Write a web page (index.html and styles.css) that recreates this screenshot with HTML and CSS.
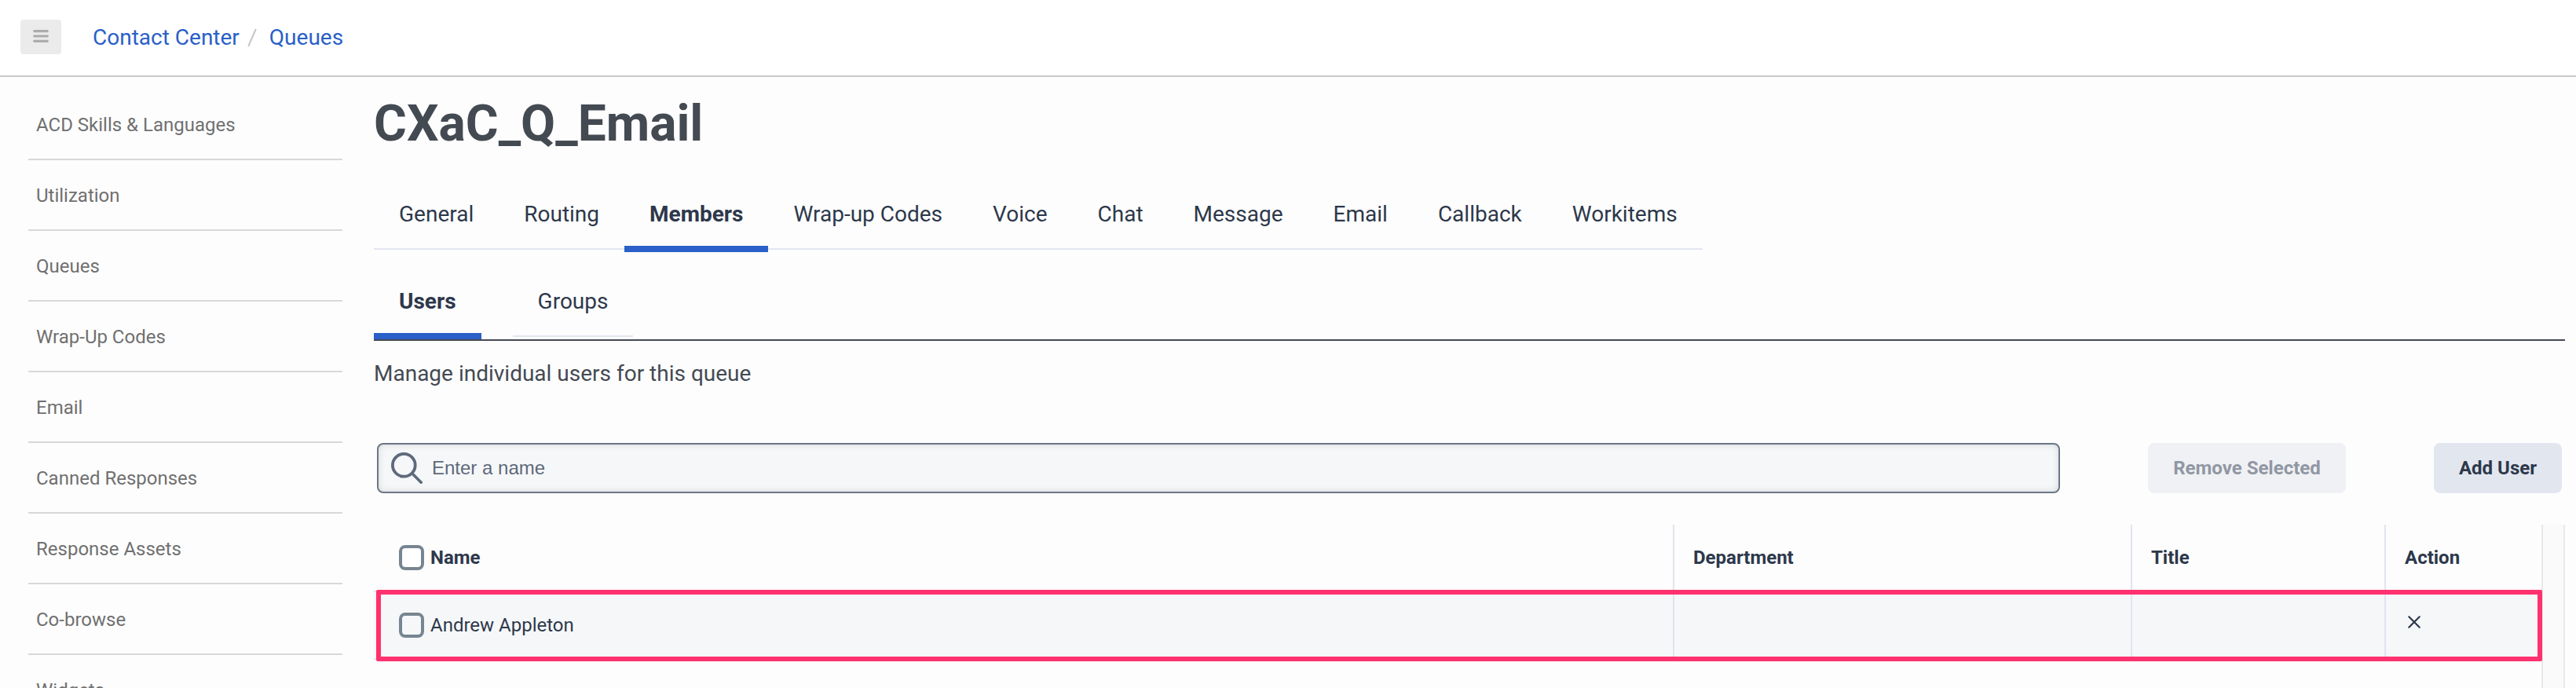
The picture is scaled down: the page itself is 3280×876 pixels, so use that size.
FILE: index.html
```html
<!DOCTYPE html>
<html lang="en">
<head>
<meta charset="utf-8">
<title>Queues - CXaC_Q_Email</title>
<link rel="stylesheet" href="styles.css">
</head>
<body>
<header class="topbar">
  <button class="menu-btn" aria-label="Menu">
    <svg width="20" height="16" viewBox="0 0 20 16"><g fill="#acacac"><rect x="0.3" y="0" width="19.4" height="3.2" rx="1"/><rect x="0.3" y="6.4" width="19.4" height="3.2" rx="1"/><rect x="0.3" y="12.8" width="19.4" height="3.2" rx="1"/></g></svg>
  </button>
  <nav class="crumbs"><a>Contact Center</a><svg class="slash" width="12" height="24" viewBox="0 0 12 24"><path d="M1.2 23 L10.8 1" stroke="#c6c6c6" stroke-width="2"/></svg><a>Queues</a></nav>
</header>
<div class="body">
  <nav class="sidebar">
    <a>ACD Skills &amp; Languages</a>
    <a>Utilization</a>
    <a>Queues</a>
    <a>Wrap-Up Codes</a>
    <a>Email</a>
    <a>Canned Responses</a>
    <a>Response Assets</a>
    <a>Co-browse</a>
    <a>Widgets</a>
  </nav>
  <main class="main">
    <h1>CXaC_Q_Email</h1>
    <div class="tabs">
      <a class="tab">General</a><a class="tab">Routing</a><a class="tab active">Members</a><a class="tab">Wrap-up Codes</a><a class="tab">Voice</a><a class="tab">Chat</a><a class="tab">Message</a><a class="tab">Email</a><a class="tab">Callback</a><a class="tab">Workitems</a>
    </div>
    <div class="subtabs">
      <a class="tab active">Users</a><a class="tab">Groups</a>
    </div>
    <p class="hint">Manage individual users for this queue</p>
    <div class="toolbar">
      <div class="search">
        <svg width="40" height="40" viewBox="0 0 40 40" fill="none" stroke="#5e697a"><circle cx="16.3" cy="16.3" r="14.4" stroke-width="3.8"/><path d="M27 27 L38.2 38.2" stroke-width="3.6" stroke-linecap="round"/></svg>
        <span>Enter a name</span>
      </div>
      <button class="btn disabled">Remove Selected</button>
      <button class="btn add">Add User</button>
    </div>
    <div class="table">
      <div class="grid">
        <div class="row head">
          <div class="cell"><i class="check"></i>Name</div>
          <div class="cell">Department</div>
          <div class="cell">Title</div>
          <div class="cell">Action</div>
        </div>
        <div class="row user">
          <div class="cell"><i class="check"></i>Andrew Appleton</div>
          <div class="cell"></div>
          <div class="cell"></div>
          <div class="cell"><svg class="x" width="16" height="16" viewBox="0 0 16 16" stroke="#2d384b" stroke-width="2.2" stroke-linecap="round"><path d="M1.3 1.3 L14.7 14.7 M14.7 1.3 L1.3 14.7"/></svg></div>
          <div class="highlight"></div>
        </div>
      </div>
      <div class="gutter"></div>
    </div>
  </main>
</div>
</body>
</html>
```
FILE: styles.css
```css
* { box-sizing: border-box; }
html, body { margin: 0; height: 876px; overflow: hidden; }
body { background: #fdfdfd; font-family: Roboto, "Liberation Sans", sans-serif; color: #2d384b; }
button { font: inherit; border: 0; padding: 0; }

.topbar { height: 98px; background: #fff; border-bottom: 2px solid #c9c9c9; display: flex; align-items: flex-start; padding: 25px 0 0 26px; }
.menu-btn { width: 52px; height: 44px; border-radius: 4px; background: #ebebeb; display: flex; align-items: flex-start; justify-content: center; padding-top: 13px; }
.crumbs { display: flex; align-items: center; height: 45px; margin-left: 40px; font-size: 28px; line-height: 45px; color: #2a60c8; }
.slash { margin: 0 16px 0 10px; }

.body { display: flex; height: 778px; overflow: hidden; }
.sidebar { width: 476px; padding: 16px 40px 0 36px; flex: none; }
.sidebar a { display: block; height: 90px; line-height: 90px; padding-left: 10px; border-bottom: 2px solid #d8d8d8; font-size: 24px; color: #707070; }

.main { width: 2790px; flex: none; }
h1 { margin: 20px 0 0; font-size: 64px; line-height: 79px; font-weight: 700; color: #444a52; }
.tabs { display: flex; width: max-content; margin-top: 36px; }
.tab { padding: 23px 32px 0; font-size: 28px; line-height: 33px; position: relative; border-bottom: 2px solid #e2e6f0; }
.tabs .tab { height: 85px; margin-bottom: 3px; }
.tab.active { font-weight: 700; }
.tab.active::after { content: ""; position: absolute; left: 0; right: 0; bottom: -5px; height: 8px; background: #2a60c8; }
.subtabs { display: flex; gap: 40px; height: 113px; padding-top: 23px; border-bottom: 2px solid #444a55; }
.subtabs .tab { height: 85px; }
.hint { margin: 24px 0 0; font-size: 28px; line-height: 35px; color: #444a52; }

.toolbar { display: flex; margin: 71px 4px 0; }
.search { width: 2143px; height: 64px; border: 2px solid #6b7785; border-radius: 8px; background: #f6f7f9; box-shadow: inset 0 0 8px rgba(0,0,0,.14); display: flex; align-items: center; gap: 12px; padding: 0 16px; font: 24px/60px "Liberation Sans", Arial, sans-serif; color: #5e697a; }
.btn { height: 64px; border-radius: 8px; font-size: 24px; font-weight: 700; white-space: nowrap; }
.disabled { width: 252px; margin-left: 112px; background: #f0f1f5; color: #9197a3; }
.add { width: 163px; margin-left: 112px; background: #e2e6ef; color: #2d384b; }

.table { display: flex; margin-top: 40px; height: 230px; }
.grid { width: 2760px; }
.row { display: grid; grid-template-columns: 1656px 583px 323px 198px; position: relative; font-size: 24px; }
.cell { display: flex; align-items: center; border-right: 2px solid #e0e4ee; padding-left: 24px; }
.cell:first-child { padding-left: 32px; }
.cell:last-child { border-right: 0; }
.head { height: 84px; font-weight: 700; }
.user { height: 88px; background: #f6f7f9; border: solid #e0e4ee; border-width: 2px 0; }
.check { width: 32px; height: 32px; border: 4px solid #768591; border-radius: 8px; margin-right: 8px; background: #fff; flex: none; }
.user .check { background: transparent; }
.x { margin: -8px 0 0 4px; }
.highlight { position: absolute; left: 3px; top: -3px; width: 2758px; height: 91px; border: 6px solid #ff316e; border-radius: 2px; }
.gutter { width: 30px; border: solid #e8e8e8; border-width: 0 2px; background: #fafafa; }
```
